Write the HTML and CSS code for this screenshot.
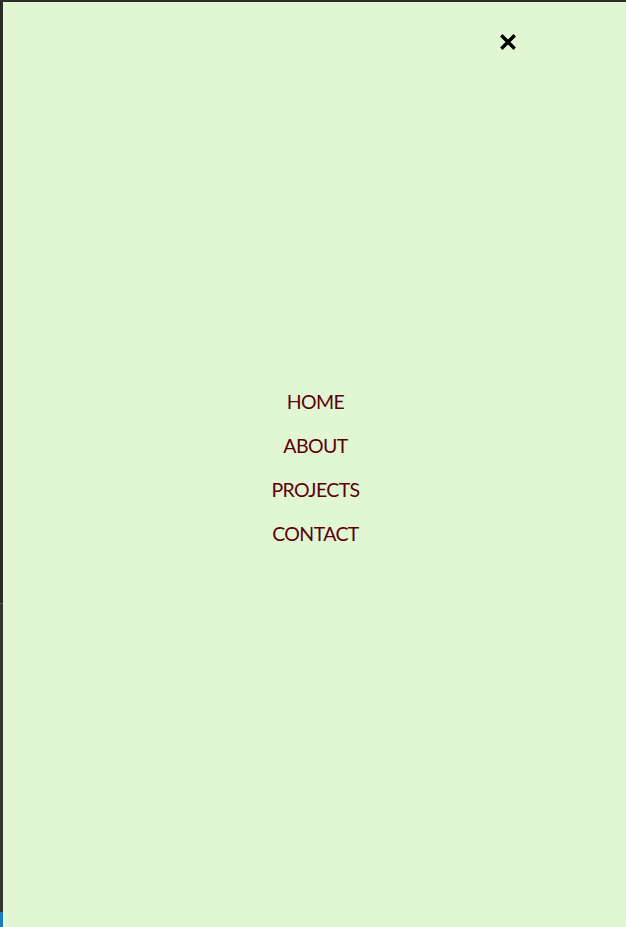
FILE: index.html
```html
<!DOCTYPE html>
<html lang="en">
<head>
<meta charset="utf-8">
<title>Menu</title>
<link rel="stylesheet" href="styles.css">
</head>
<body>
<div class="frame">
  <div class="side">
    <div class="side-top"></div>
    <div class="side-mid"></div>
    <div class="side-blue"></div>
  </div>
  <div class="panel">
    <button class="close" aria-label="Close menu">
      <svg width="16" height="16" viewBox="0 0 16 16"><path d="M2.5 2.5 L13.5 13.5 M13.5 2.5 L2.5 13.5" stroke="#000" stroke-width="3.4" stroke-linecap="square" fill="none"/></svg>
    </button>
    <nav class="menu">
      <a href="#">HOME</a>
      <a href="#">ABOUT</a>
      <a href="#">PROJECTS</a>
      <a href="#">CONTACT</a>
    </nav>
  </div>
</div>
</body>
</html>
```
FILE: styles.css
```css
html, body {
  margin: 0;
  padding: 0;
  height: 100%;
  background: #2d2d2d;
}
.frame {
  display: flex;
  height: 927px;
  padding-top: 2px;
  box-sizing: border-box;
}
.side {
  width: 3px;
  display: flex;
  flex-direction: column;
}
.side-top {
  flex: 0 0 601px;
  background: #2a2a2a;
}
.side-mid {
  flex: 1;
  background: #343434;
  border-top: 1px solid #5a5a5a;
}
.side-blue {
  flex: 0 0 15px;
  background: #1c7ac0;
}
.panel {
  flex: 1;
  position: relative;
  background: #e1f7d4;
  display: flex;
  align-items: center;
  justify-content: center;
}
.close {
  position: absolute;
  top: 32px;
  left: 497px;
  width: 16px;
  height: 16px;
  padding: 0;
  border: 0;
  background: none;
  display: block;
}
.close svg { display: block; }
.menu {
  display: flex;
  flex-direction: column;
  align-items: center;
  margin-top: 6px;
  margin-left: 2px;
}
.menu a {
  font-family: "Lato", "Liberation Sans", sans-serif;
  font-size: 19.5px;
  letter-spacing: -0.6px;
  line-height: 44px;
  color: #5c0008;
  text-decoration: none;
}
```
